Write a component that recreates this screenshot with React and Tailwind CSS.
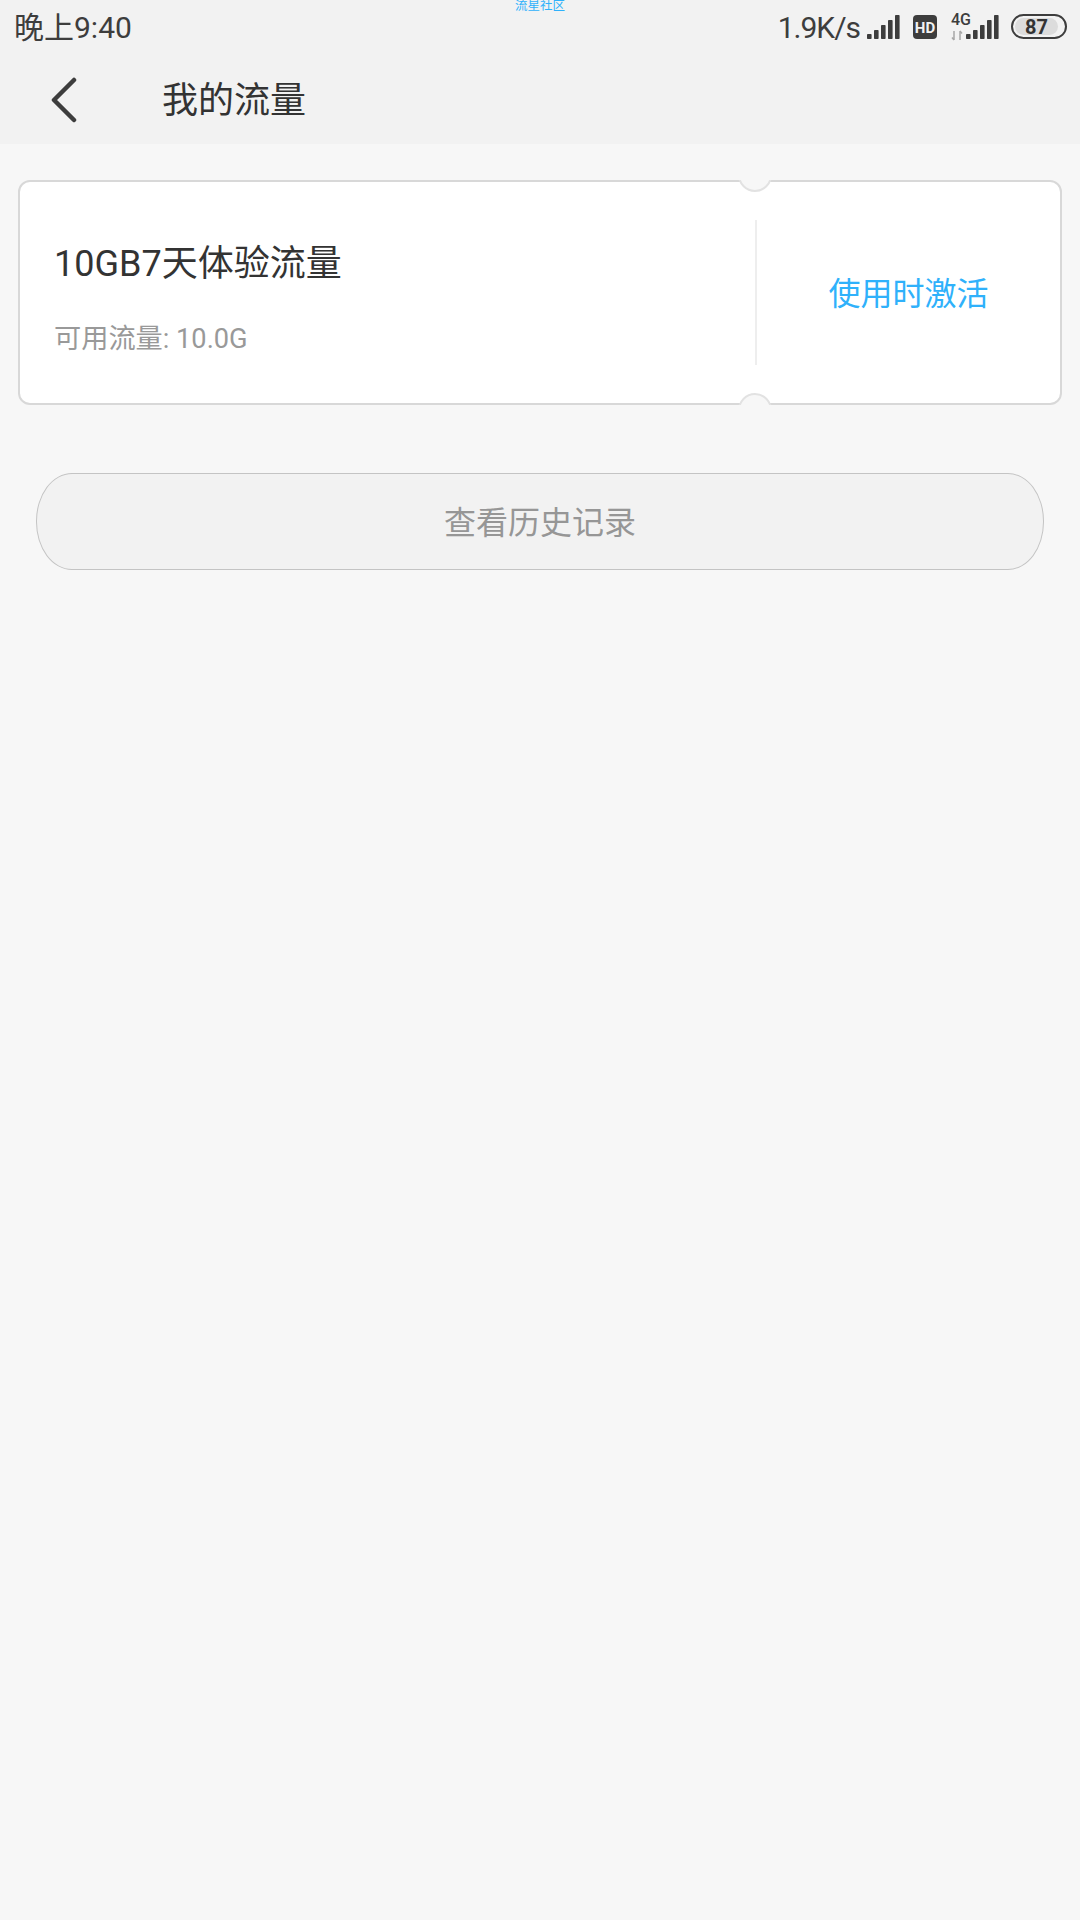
const FONT = "font-['Roboto','Noto_Sans_CJK_SC',sans-serif]";

function Signal({ className }) {
  const bars = [
    [0, 5],
    [7, 9],
    [14, 14],
    [21, 19],
    [28, 24],
  ];
  return (
    <svg width="33" height="24" viewBox="0 0 33 24" className={className}>
      {bars.map(([x, h], i) => (
        <rect key={i} x={x} y={24 - h} width="4.6" height={h} rx="0.8" fill="#3d3d3d" />
      ))}
    </svg>
  );
}

function Notch({ bottom }) {
  return (
    <div
      className={
        bottom
          ? "absolute left-[718px] bottom-[-2px] h-[12px] w-[34px] overflow-hidden"
          : "absolute left-[718px] top-[-2px] h-[12px] w-[34px] overflow-hidden"
      }
    >
      <div
        className={
          bottom
            ? "absolute left-0 top-0 h-[34px] w-[34px] rounded-full border-2 border-[#e2e2e2] bg-[#f7f7f7]"
            : "absolute bottom-0 left-0 h-[34px] w-[34px] rounded-full border-2 border-[#e2e2e2] bg-[#f7f7f7]"
        }
      />
    </div>
  );
}

export default function App() {
  return (
    <div className={`${FONT} relative min-h-[1920px] w-[1080px] bg-[#f7f7f7]`}>
      <div className="absolute left-[515px] top-[-2px] text-[12.5px] leading-[16px] text-[#2fb1fb]">流星社区</div>

      <header className="h-[144px] bg-[#f2f2f2]">
        <div className="flex h-[56px] items-center justify-between pl-[14px] pr-[13px] text-[#3d3d3d]">
          <span className="text-[30px] leading-[56px]">晚上9:40</span>
          <div className="flex items-center">
            <span className="text-[30px] leading-[56px] tracking-[-1px]">1.9K/s</span>
            <Signal className="ml-[7px] mb-[3px]" />
            <svg width="24" height="24" viewBox="0 0 24 24" className="ml-[13px] mb-[3px]">
              <rect width="24" height="24" rx="4" fill="#3d3d3d" />
              <text x="12" y="17.5" textAnchor="middle" fontSize="15" fontWeight="700" fontFamily="Roboto, sans-serif" fill="#f2f2f2">HD</text>
            </svg>
            <svg width="16" height="30" viewBox="0 0 16 30" className="ml-[14px] mb-[3px] overflow-visible">
              <text x="0" y="13" fontSize="16" fontWeight="500" fontFamily="Roboto, sans-serif" fill="#3d3d3d">4G</text>
              <path d="M3 19v9M3 28l-2-2.5M9 28v-9M9 19l2 2.5" stroke="#a8a8a8" strokeWidth="1.5" fill="none" />
            </svg>
            <Signal className="-ml-[1px] mb-[3px]" />
            <div className="ml-[12px] mb-[3px] flex h-[25px] w-[56px] items-center rounded-full border-[2.5px] border-[#3d3d3d] p-[2px]">
              <div className="flex h-full w-[43px] items-center justify-center rounded-full bg-[#dcdcdc] text-[20px] font-bold leading-none text-[#333333]">87</div>
            </div>
          </div>
        </div>
        <div className="flex h-[88px] items-center">
          <svg width="28" height="46" viewBox="0 0 28 46" className="ml-[50px]">
            <path d="M24 3 L4 23 L24 43" fill="none" stroke="#3d3d3d" strokeWidth="4.5" strokeLinecap="round" strokeLinejoin="round" />
          </svg>
          <h1 className="ml-[84px] pt-[2px] text-[36px] font-normal leading-[46px] text-[#333333]">我的流量</h1>
        </div>
      </header>

      <section className="px-[18px] pt-[36px]">
        <div className="relative flex h-[225px] w-[1044px] rounded-[12px] border-2 border-[#d8d8d8] bg-white">
          <Notch />
          <Notch bottom />
          <div className="flex w-[735px] flex-col pl-[34px] pt-[58px]">
            <div className="text-[36px] leading-[48px] text-[#333333]">10GB7天体验流量</div>
            <div className="mt-[33px] text-[27.2px] leading-[36px] text-[#999999]">可用流量: 10.0G</div>
          </div>
          <div className="my-[38px] w-[2px] bg-[#eeeeee]" />
          <div className="flex flex-1 items-center justify-center pt-[3px] text-[32px] text-[#2fb1fb]">使用时激活</div>
        </div>

        <button className="mx-[18px] mt-[68px] flex h-[97px] w-[1008px] items-center justify-center rounded-[36px/48px] border border-[#c4c4c4] bg-[#f2f2f2] pt-[2px] text-[32px] text-[#969696]">
          查看历史记录
        </button>
      </section>
    </div>
  );
}
